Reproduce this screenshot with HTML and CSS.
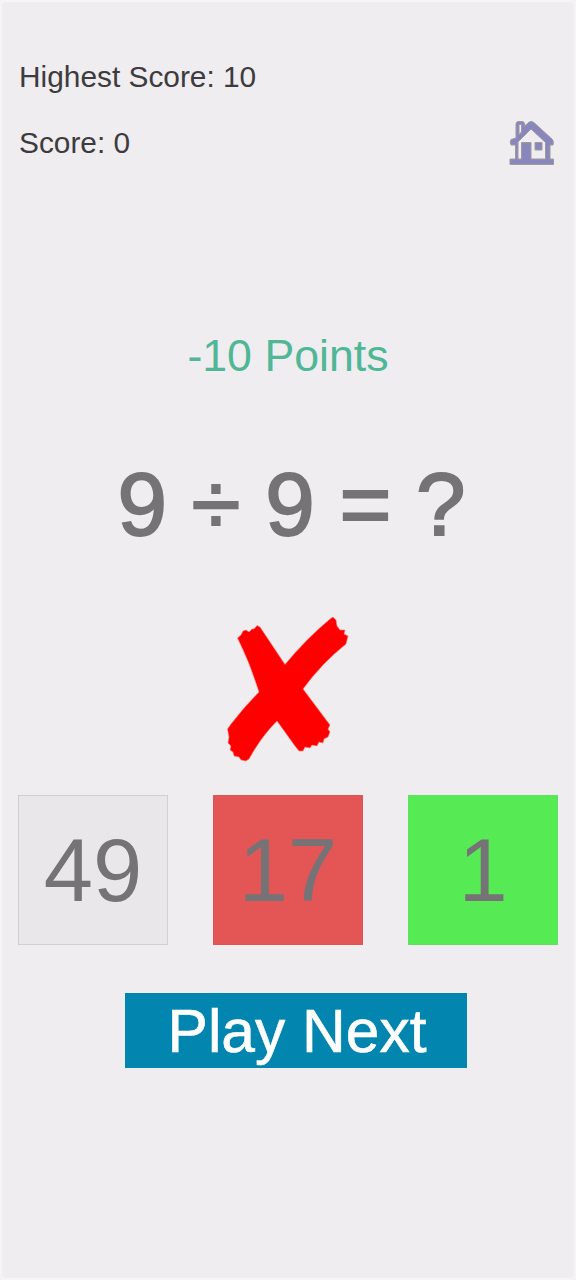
FILE: index.html
```html
<!DOCTYPE html>
<html lang="en">
<head>
<meta charset="utf-8">
<title>Math Quiz</title>
<link rel="stylesheet" href="styles.css">
</head>
<body>
<main class="screen">
  <header class="header">
    <p class="best">Highest Score: 10</p>
    <div class="status">
      <p class="score">Score: 0</p>
      <svg class="home" viewBox="0 0 46 46" role="img" aria-label="Home">
        <g fill="#8986be" stroke="#a09a9c" stroke-width="1">
          <path fill-rule="evenodd" d="M7 18V4Q7 1.500 9.500 1.500H13Q15.500 1.500 15.500 4V6L18.500 3.500Q22 -.5 26 3.500L43.500 19.500Q45 22 44 25H41V39H44.500V44.500H1V39H6.500V25H2Q.5 22 2 19.500ZM10 14.500L12.500 12V4.500H10ZM22 9L9 22V39H12.500V22.500H22V39H36.500V22.500Z"/>
          <path d="M26 22.500H33V30H26Z"/>
        </g>
      </svg>
    </div>
  </header>
  <p class="points">-10 Points</p>
  <p class="question">9 ÷ 9 = ?</p>
  <svg class="cross" viewBox="0 0 145 165" role="img" aria-label="Wrong">
    <path d="M22.500 33L26 30L28 26L31 25L34 27L37 24L39 24L42 20.500L45 22L70 59.500Q91 34 115 14L118 12L121 15L122 21L125 25L130 25L129 29L133 31L131 39Q107 58 88 84L115 120L113 124L115 127L113 132L109 134L108 138L104 137L102 141L97 140L95 143L90 142L88 146L84 146L80 141L62 116Q46 132 34 154L31 156L26 155L24 152L19 151L18 147L15 145L16 141L13 138L14 132L12.500 124L16 119Q30 101 44 87Q35 58 22.500 33Z" fill="#fe0000" stroke="#f57f80" stroke-width=".6" stroke-linejoin="round"/>
  </svg>
  <div class="answers">
    <button class="answer">49</button>
    <button class="answer wrong">17</button>
    <button class="answer correct">1</button>
  </div>
  <button class="next">Play Next</button>
</main>
</body>
</html>
```
FILE: styles.css
```css
* { box-sizing: border-box; }
body { margin: 0; background: #f5f4f5; font-family: "Liberation Sans", Arial, sans-serif; }
p { margin: 0; white-space: nowrap; }
button { font: inherit; border: 0; padding: 0; margin: 0; border-radius: 0; }
.screen {
  display: flex;
  flex-direction: column;
  align-items: center;
  height: 1280px;
  padding-top: 58px;
  background: #efedef;
  border: 2px solid #f5f4f6;
  border-radius: 6px;
}
.header {
  display: flex;
  flex-direction: column;
  gap: 23px;
  width: 100%;
  padding: 0 19px 0 17px;
  color: #3d3b3e;
  font-size: 29.85px;
  line-height: 34px;
}
.status { display: flex; justify-content: space-between; height: 48px; padding-top: 3px; }
.status .score { padding-top: 6px; }
.home { width: 46px; height: 46px; }
.points { margin-top: 165px; color: #4fb796; font-size: 44.7px; line-height: 52px; }
.question {
  margin: 72px 0 0 7px;
  color: #757376;
  font-size: 89px;
  line-height: 100px;
  -webkit-text-stroke: 2px #757376;
}
.cross { width: 145px; height: 165px; margin: 51px 2px 0 0; }
.answers {
  display: grid;
  grid-template-columns: repeat(3, 150px);
  justify-content: space-between;
  width: 540px;
  margin-top: 25px;
}
.answer {
  height: 150px;
  padding-top: 2px;
  border: 1px solid #d1cfd1;
  background: #e9e7e9;
  color: #757376;
  font-size: 88.5px;
  line-height: 146px;
}
.wrong { background: #e45555; border-color: #d95558; }
.correct { background: #56ea55; border-color: #61df60; }
.next {
  width: 342px;
  height: 75px;
  margin: 48px 0 0 16px;
  padding-left: 2px;
  background: #0285af;
  color: #fff;
  font-size: 60.5px;
  line-height: 74px;
  -webkit-text-stroke: .6px #fff;
}
```
